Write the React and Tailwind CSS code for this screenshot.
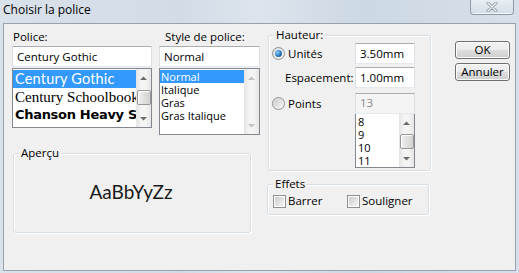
import React from 'react';

const Arrow = ({ dir, color }) => (
  <svg width="7" height="4" viewBox="0 0 7 4">
    <path d={dir === 'up' ? 'M0 4 L3.5 0.5 L7 4 Z' : 'M0 0 L3.5 3.5 L7 0 Z'} fill={color} />
  </svg>
);

const ScrollBar = ({ thumbTop, thumbH, disabled }) => {
  const color = disabled ? '#c2c2c2' : '#6a6a6a';
  return (
    <div className="w-[15px] h-full flex flex-col bg-[linear-gradient(90deg,#e4e4e4,#f4f4f4_35%,#f4f4f4_65%,#e6e6e6)]">
      <div className="h-[17px] flex items-center justify-center shrink-0">
        <Arrow dir="up" color={color} />
      </div>
      <div className="flex-1 flex flex-col items-center">
        {thumbH ? (
          <div
            className="w-[14px] rounded-[2px] border border-[#979797] bg-[linear-gradient(90deg,#f1f1f1,#e0e0e0_50%,#d2d2d2)] shadow-[inset_1px_1px_0_#fff]"
            style={{ marginTop: thumbTop, height: thumbH }}
          />
        ) : null}
      </div>
      <div className="h-[17px] flex items-center justify-center shrink-0">
        <Arrow dir="down" color={color} />
      </div>
    </div>
  );
};

const TextBox = ({ value, disabled, className = '' }) => (
  <div
    className={`h-[21px] border border-[#abadb3] border-b-[#e3e9ef] border-x-[#dbdfe6] flex items-center pl-[4px] text-[11.5px] ${
      disabled ? 'bg-[#f4f4f4] text-[#8a8a8a]' : 'bg-white text-black'
    } ${className}`}
  >
    {value}
  </div>
);

const Radio = ({ checked }) => (
  <div className="w-[13px] h-[13px] rounded-full border border-[#8e8f8f] bg-[linear-gradient(135deg,#dcdcdc,#fbfbfb)] flex items-center justify-center shrink-0">
    {checked ? (
      <div className="w-[7px] h-[7px] rounded-full bg-[radial-gradient(circle_at_35%_35%,#8fd0f5,#2a7fc4_50%,#16466f)]" />
    ) : (
      <div className="w-[9px] h-[9px] rounded-full bg-[linear-gradient(135deg,#cbcbcb,#f6f6f6)]" />
    )}
  </div>
);

const Check = () => (
  <div className="w-[13px] h-[13px] border border-[#8e8f8f] bg-white flex items-center justify-center shrink-0">
    <div className="w-[9px] h-[9px] bg-[linear-gradient(135deg,#cbcbcb,#f6f6f6)]" />
  </div>
);

const Group = ({ label, className = '', children }) => (
  <div
    className={`relative border border-[#d5dfe5] rounded-[3px] shadow-[inset_1px_1px_0_#fff,1px_1px_0_#fff] ${className}`}
  >
    <span className="absolute -top-[8px] left-[5px] bg-[#f0f0f0] px-[2px] leading-[14px]">{label}</span>
    {children}
  </div>
);

const Button = ({ children }) => (
  <div className="h-[18px] w-[55px] rounded-[3px] border border-[#707070] bg-[linear-gradient(180deg,#f2f2f2_0%,#ebebeb_50%,#dddddd_51%,#cfcfcf_100%)] shadow-[inset_0_0_0_1px_#fcfcfc] flex items-center justify-center text-[11.5px]">
    {children}
  </div>
);

export default function App() {
  return (
    <div className="w-[519px] h-[273px] overflow-hidden flex flex-col font-['Segoe_UI','Open_Sans',sans-serif] text-[11.5px] text-black bg-[linear-gradient(90deg,#d9e1ea_0%,#d2dce7_35%,#dde4ec_50%,#ccd8e4_70%,#d7e0ea_100%)]">
      {/* title bar */}
      <div className="h-[23px] flex items-start justify-between shrink-0">
        <span className="ml-[3px] mt-[2px] text-[12px] leading-[16px]">Choisir la police</span>
        <div className="mr-[5px] w-[44px] h-[15px] rounded-b-[4px] border border-t-0 border-[#8d9aa8] bg-[linear-gradient(180deg,#e9eef3,#d4dde7)] shadow-[inset_0_-1px_0_#f4f7fa] flex items-center justify-center">
          <svg width="12" height="10" viewBox="0 0 12 10">
            <path d="M2 1 L10 9 M10 1 L2 9" stroke="#8a96a3" strokeWidth="3" strokeLinecap="round" />
            <path d="M2 1 L10 9 M10 1 L2 9" stroke="#f6f8fa" strokeWidth="1.3" strokeLinecap="round" />
          </svg>
        </div>
      </div>

      {/* client area */}
      <div className="mx-[3px] h-[248px] border border-[#97a2ae] bg-[#f0f0f0] flex pl-[8px] pt-[6px]">
        {/* left block */}
        <div className="w-[248px] flex flex-col">
          <div className="flex gap-[7px]">
            {/* font column */}
            <div className="w-[140px] flex flex-col">
              <div className="h-[14px] leading-[14px] pl-[1px]">Police:</div>
              <TextBox value="Century Gothic" className="mt-[2px]" />
              <div className="mt-[1px] h-[60px] border border-[#828790] bg-white flex overflow-hidden">
                <div className="flex-1 flex flex-col overflow-hidden whitespace-nowrap pt-[1px]">
                  <div className="h-[18px] leading-[18px] bg-[#3399ff] text-white pl-[2px] text-[14.5px] tracking-[0.2px] font-['Century_Gothic','Lato',sans-serif]">
                    Century Gothic
                  </div>
                  <div className="h-[18px] leading-[18px] pl-[2px] text-[15px] font-['Century_Schoolbook','Liberation_Serif',serif]">
                    Century Schoolbook
                  </div>
                  <div className="h-[18px] leading-[18px] pl-[2px] text-[13px] font-black tracking-[-0.3px] font-['Arial_Black','DejaVu_Sans',sans-serif]">
                    Chanson Heavy SF
                  </div>
                </div>
                <ScrollBar thumbTop={4} thumbH={15} />
              </div>
            </div>
            {/* style column */}
            <div className="w-[101px] flex flex-col">
              <div className="h-[14px] leading-[14px] pl-[6px]">Style de police:</div>
              <TextBox value="Normal" className="mt-[2px]" />
              <div className="mt-[1px] h-[67px] border border-[#828790] bg-white flex overflow-hidden">
                <div className="flex-1 flex flex-col text-[11px] leading-[13px] pt-[1px]">
                  <div className="bg-[#3399ff] text-white pl-[1px] h-[13px]">Normal</div>
                  <div className="pl-[1px] h-[13px]">Italique</div>
                  <div className="pl-[1px] h-[13px]">Gras</div>
                  <div className="pl-[1px] h-[13px]">Gras Italique</div>
                </div>
                <ScrollBar disabled />
              </div>
            </div>
          </div>

          <Group label="Aperçu" className="ml-[1px] mt-[18px] w-[238px] h-[80px]">
            <div className="h-full flex items-center justify-center pb-[2px] pr-[2px] text-[19px] text-[#1a1a1a] font-['Century_Gothic','Lato',sans-serif]">
              AaBbYyZz
            </div>
          </Group>
        </div>

        {/* height column */}
        <div className="ml-[8px] w-[163px] flex flex-col">
          <Group label="Hauteur:" className="mt-[5px] h-[136px] pt-[7px]">
            <div className="flex h-[21px] items-center">
              <div className="w-[86px] flex items-center pl-[3px] gap-[3px]">
                <Radio checked />
                <span>Unités</span>
              </div>
              <TextBox value="3.50mm" className="w-[60px]" />
            </div>
            <div className="flex h-[21px] items-center mt-[3px]">
              <div className="w-[86px] pl-[16px]">Espacement:</div>
              <TextBox value="1.00mm" className="w-[60px]" />
            </div>
            <div className="flex h-[20px] items-center mt-[5px]">
              <div className="w-[86px] flex items-center pl-[3px] gap-[3px] self-start mt-[2px]">
                <Radio />
                <span>Points</span>
              </div>
              <TextBox value="13" disabled className="w-[60px] h-[20px]" />
            </div>
            <div className="ml-[86px] w-[60px] h-[55px] border border-[#828790] bg-white flex overflow-hidden">
              <div className="flex-1 flex flex-col text-[11px] leading-[13px] pl-[2px] pt-[1px]">
                <div>8</div>
                <div>9</div>
                <div>10</div>
                <div>11</div>
              </div>
              <ScrollBar thumbTop={3} thumbH={15} />
            </div>
          </Group>

          <Group label="Effets" className="-ml-[1px] mt-[13px] w-[162px] h-[31px]">
            <div className="flex items-center h-full pt-[3px]">
              <div className="w-[79px] flex items-center pl-[5px] gap-[2px]">
                <Check />
                <span>Barrer</span>
              </div>
              <div className="flex items-center gap-[2px]">
                <Check />
                <span>Souligner</span>
              </div>
            </div>
          </Group>
        </div>

        {/* buttons */}
        <div className="ml-[24px] flex flex-col gap-[4px] pt-[11px]">
          <Button>OK</Button>
          <Button>Annuler</Button>
        </div>
      </div>
    </div>
  );
}
